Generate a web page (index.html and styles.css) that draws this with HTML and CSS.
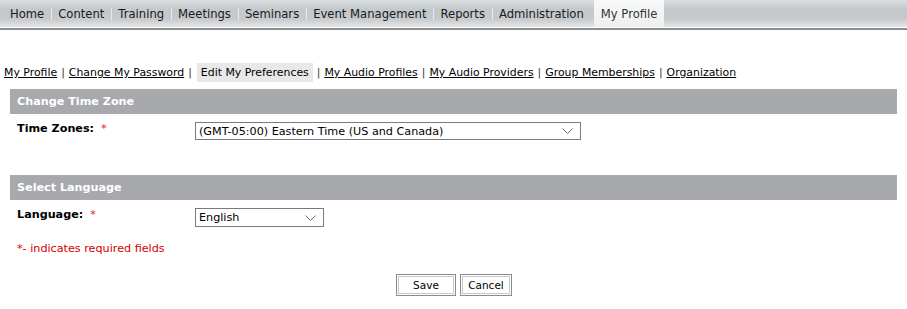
FILE: index.html
```html
<!DOCTYPE html>
<html lang="en">
<head>
    <meta charset="UTF-8">
    <title>Edit My Preferences</title>
    <link rel="stylesheet" href="styles.css">
</head>
<body>

    <!-- top menu -->
    <div class="top-nav">
        <a class="nav-item" href="#">Home</a>
        <a class="nav-item" href="#">Content</a>
        <a class="nav-item" href="#">Training</a>
        <a class="nav-item" href="#">Meetings</a>
        <a class="nav-item" href="#">Seminars</a>
        <a class="nav-item" href="#">Event Management</a>
        <a class="nav-item" href="#">Reports</a>
        <a class="nav-item" href="#">Administration</a>
        <a class="nav-item active" href="#">My Profile</a>
    </div>

    <!-- profile sub menu -->
    <div class="sub-nav">
        <a href="#">My Profile</a><span class="sep">|</span>
        <a href="#">Change My Password</a><span class="sep">|</span>
        <span class="current">Edit My Preferences</span><span class="sep">|</span>
        <a href="#">My Audio Profiles</a><span class="sep">|</span>
        <a href="#">My Audio Providers</a><span class="sep">|</span>
        <a href="#">Group Memberships</a><span class="sep">|</span>
        <a href="#">Organization</a>
    </div>

    <div class="section">
        <div class="section-head">Change Time Zone</div>
        <div class="form-row">
            <label class="field-label">Time Zones: <span class="req">*</span></label>
            <div class="select wide">
                <span>(GMT-05:00) Eastern Time (US and Canada)</span>
                <svg width="11" height="6" viewBox="0 0 11 6"><path d="M0.5 0.5 L5.5 5.5 L10.5 0.5" fill="none" stroke="#666" stroke-width="1"/></svg>
            </div>
        </div>
    </div>

    <div class="section second">
        <div class="section-head">Select Language</div>
        <div class="form-row">
            <label class="field-label">Language: <span class="req">*</span></label>
            <div class="select narrow">
                <span>English</span>
                <svg width="11" height="6" viewBox="0 0 11 6"><path d="M0.5 0.5 L5.5 5.5 L10.5 0.5" fill="none" stroke="#666" stroke-width="1"/></svg>
            </div>
        </div>
        <div class="required-note">*- indicates required fields</div>
    </div>

    <div class="buttons">
        <button class="btn save">Save</button>
        <button class="btn">Cancel</button>
    </div>

</body>
</html>
```

FILE: styles.css
```css
body {
    margin: 0;
    font-family: "DejaVu Sans", Verdana, sans-serif;
    font-size: 11px;
    color: #000;
    background: #fff;
}

/* --- top menu --- */
.top-nav {
    display: flex;
    height: 27px;
    background: linear-gradient(to bottom, #dcdfe1 0%, #c3c8cc 35%, #c6cacd 70%, #e4e5e6 100%);
    border-bottom: 1px solid #fff;
    box-shadow: 0 2px 0 #8c8c8c;
    padding-left: 3px;
}

.nav-item {
    display: flex;
    align-items: center;
    padding: 0 7px;
    color: #1a1a1a;
    text-decoration: none;
    position: relative;
    font-size: 11.6px;
}

/* thin divider between tabs */
.nav-item + .nav-item::before {
    content: "";
    position: absolute;
    left: 0;
    top: 8px;
    height: 12px;
    border-left: 1px solid #e8e9ea;
}

.nav-item.active {
    background: linear-gradient(to bottom, #f7f8f8, #eef0f0);
    color: #333;
    margin-left: 3px;
}

.nav-item.active::before {
    display: none;
}

/* --- sub menu --- */
.sub-nav {
    margin-top: 35px;
    padding-left: 4px;
    display: flex;
    align-items: center;
    height: 19px;
    font-size: 10.9px;
}

.sub-nav a {
    color: #000;
    text-decoration: underline;
}

.sub-nav .sep {
    padding: 0 4px;
    color: #333;
}

.sub-nav .current {
    background: #e8e8e8;
    padding: 3px 4px 3px 4px;
    margin-left: 1px;
}

/* --- sections --- */
.section {
    margin: 7px 10px 0 10px;
}

.section.second {
    margin-top: 35px;
}

.section-head {
    height: 25px;
    line-height: 25px;
    background: #a7a9ac;
    color: #fff;
    font-weight: bold;
    padding-left: 7px;
    font-size: 11.2px;
}

.form-row {
    display: flex;
    align-items: flex-start;
    padding-top: 8px;
    padding-left: 7px;
}

.field-label {
    width: 178px;
    font-weight: bold;
    font-size: 11.2px;
    line-height: 14px;
}

.req {
    color: #e02020;
    font-weight: normal;
    margin-left: 3px;
}

.select {
    display: flex;
    align-items: center;
    justify-content: space-between;
    height: 16px;
    border: 1px solid #7a7a7a;
    padding: 0 7px 0 3px;
    font-size: 11.2px;
    background: #fff;
}

.select.wide {
    width: 374px;
}

.select.narrow {
    width: 117px;
    height: 17px;
}

.required-note {
    color: #d40000;
    padding: 15px 0 0 7px;
    font-size: 11.2px;
}

/* --- buttons --- */
.buttons {
    display: flex;
    justify-content: center;
    gap: 4px;
    margin-top: 19px;
    padding-left: 1px;
}

.btn {
    font-family: "DejaVu Sans", Verdana, sans-serif;
    font-size: 10.5px;
    background: #fff;
    border: 1px solid #8a8a8a;
    box-shadow: inset 0 0 0 1px #fff, inset 0 0 0 2px #c8c8c8;
    height: 22px;
    padding: 0;
    color: #000;
}

.btn.save {
    width: 60px;
}

.btn + .btn {
    width: 52px;
}
```
